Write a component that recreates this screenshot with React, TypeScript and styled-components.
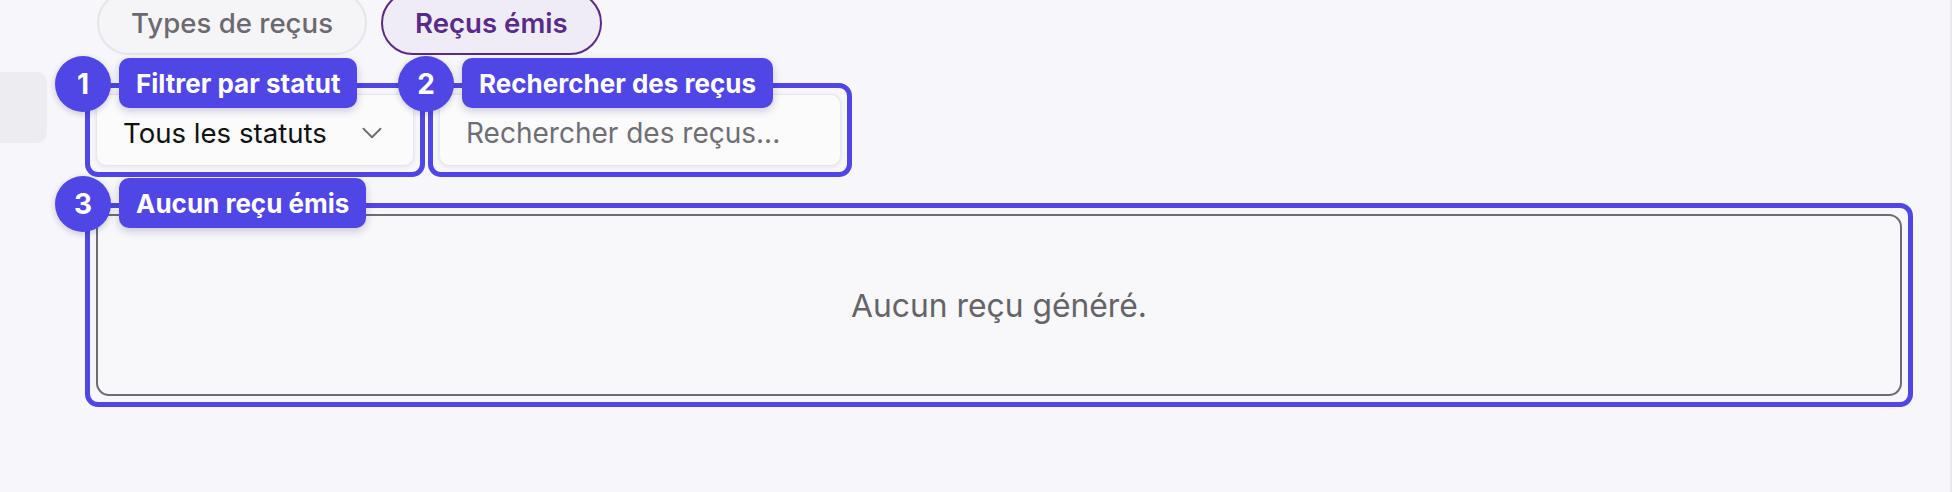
import React from "react";
import styled, { createGlobalStyle } from "styled-components";
import { ChevronDown } from "lucide-react";

const GlobalStyle = createGlobalStyle`
  html, body {
    margin: 0;
    padding: 0;
    background: #f7f6fa;
    font-family: Inter, "Noto Sans", "Liberation Sans", sans-serif;
  }
`;

const accent = "#4f46e5";

const Page = styled.div`
  box-sizing: border-box;
  width: 1952px;
  height: 492px;
  overflow: hidden;
  display: flex;
  background: #f7f6fa;
  border-right: 2px solid #e9e8ed;
`;

const Sidebar = styled.div`
  width: 47px;
  flex-shrink: 0;
  padding-top: 72px;
`;

const SideItem = styled.div`
  height: 71px;
  background: #edecf0;
  border-radius: 0 10px 10px 0;
`;

const Main = styled.div`
  flex: 1;
  display: flex;
  flex-direction: column;
  padding-left: 38px;
`;

const Tabs = styled.div`
  display: flex;
  gap: 14px;
  margin: -9px 0 0 12px;
`;

const Tab = styled.button<{ $active?: boolean }>`
  box-sizing: border-box;
  height: 64px;
  padding: 0 32px;
  border-radius: 999px;
  font-family: inherit;
  font-size: 27.6px;
  font-weight: ${(p) => (p.$active ? 600 : 500)};
  color: ${(p) => (p.$active ? "#5a2a8a" : "#6b6a70")};
  background: ${(p) => (p.$active ? "#f0ecf5" : "#f5f4f7")};
  border: ${(p) => (p.$active ? "2px solid #5b2a86" : "2px solid #e6e5e9")};
  cursor: pointer;
`;

const Row = styled.div`
  display: flex;
  gap: 3px;
  margin-top: 28px;
`;

const Highlight = styled.div<{ $width: number; $height: number }>`
  position: relative;
  box-sizing: border-box;
  width: ${(p) => p.$width}px;
  height: ${(p) => p.$height}px;
  border: 5px solid ${accent};
  border-radius: 13px;
  padding: 6px;
  display: flex;
`;

const Badge = styled.div`
  position: absolute;
  top: -32px;
  left: -35px;
  width: 56px;
  height: 56px;
  border-radius: 50%;
  background: ${accent};
  color: #fff;
  font-size: 28px;
  font-weight: 700;
  display: flex;
  align-items: center;
  justify-content: center;
  box-shadow: 0 2px 6px rgba(30, 20, 80, 0.22);
  z-index: 2;
`;

const Label = styled.div`
  position: absolute;
  top: -30px;
  left: 29px;
  height: 50px;
  padding: 0 17px;
  border-radius: 10px;
  background: ${accent};
  color: #fff;
  font-size: 26px;
  font-weight: 700;
  display: flex;
  align-items: center;
  white-space: nowrap;
  box-shadow: 0 3px 8px rgba(30, 20, 80, 0.22);
  z-index: 2;
`;

const Field = styled.div`
  flex: 1;
  box-sizing: border-box;
  display: flex;
  align-items: center;
  justify-content: space-between;
  padding: 6px 24px 0 26px;
  background: #fbfbfc;
  border: 1px solid #e7e6eb;
  border-radius: 10px;
  box-shadow: 0 1px 4px rgba(0, 0, 0, 0.08);
  font-size: 27.6px;
  color: #111;
`;

const SearchInput = styled.input`
  flex: 1;
  min-width: 0;
  width: 100%;
  box-sizing: border-box;
  padding: 6px 16px 0 26px;
  background: #fbfbfc;
  border: 1px solid #e7e6eb;
  border-radius: 10px;
  box-shadow: 0 1px 4px rgba(0, 0, 0, 0.08);
  font-family: inherit;
  font-size: 28px;
  color: #111;
  outline: none;

  &::placeholder {
    color: #6f6e74;
  }
`;

const Section = styled.div`
  margin-top: 26px;
`;

const Empty = styled.div`
  flex: 1;
  display: flex;
  align-items: center;
  justify-content: center;
  border: 2px solid #6d6c72;
  border-radius: 13px;
  background: #f8f7fa;
  font-size: 31.8px;
  color: #656469;
`;

const Spot: React.FC<{
  n: number;
  label: string;
  width: number;
  height: number;
  children: React.ReactNode;
}> = ({ n, label, width, height, children }) => (
  <Highlight $width={width} $height={height}>
    <Badge>{n}</Badge>
    <Label>{label}</Label>
    {children}
  </Highlight>
);

export default function App() {
  return (
    <>
      <GlobalStyle />
      <Page>
        <Sidebar>
          <SideItem />
        </Sidebar>
        <Main>
          <Tabs>
            <Tab>Types de reçus</Tab>
            <Tab $active>Reçus émis</Tab>
          </Tabs>
          <Row>
            <Spot n={1} label="Filtrer par statut" width={340} height={94}>
              <Field>
                <span>Tous les statuts</span>
                <ChevronDown size={34} strokeWidth={1.3} color="#6b6a70" />
              </Field>
            </Spot>
            <Spot n={2} label="Rechercher des reçus" width={424} height={94}>
              <SearchInput placeholder="Rechercher des reçus..." />
            </Spot>
          </Row>
          <Section>
            <Spot n={3} label="Aucun reçu émis" width={1828} height={204}>
              <Empty>Aucun reçu généré.</Empty>
            </Spot>
          </Section>
        </Main>
      </Page>
    </>
  );
}
